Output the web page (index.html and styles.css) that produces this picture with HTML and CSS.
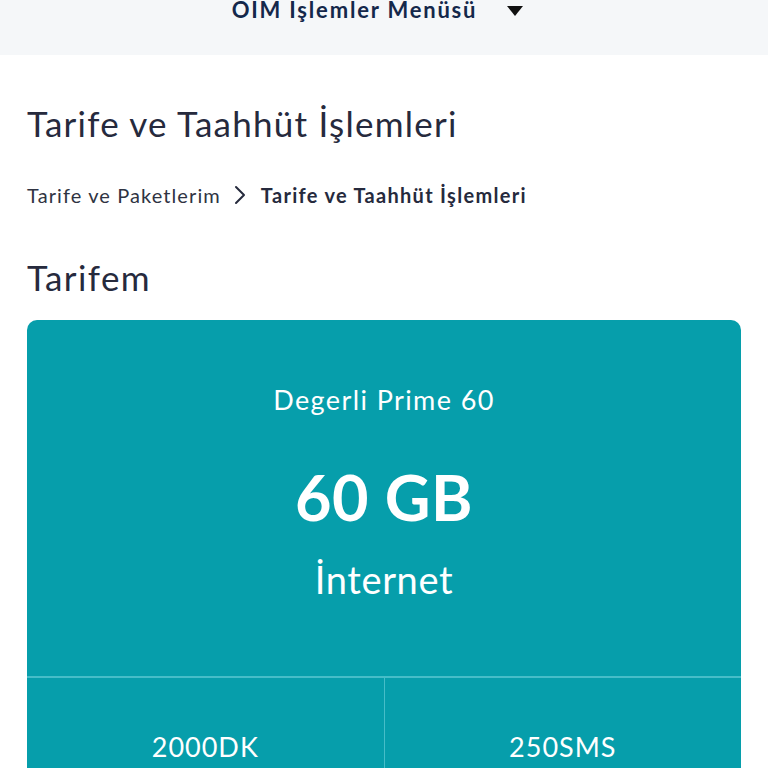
FILE: index.html
```html
<!DOCTYPE html>
<html lang="tr">
<head>
  <meta charset="UTF-8">
  <title>Tarife ve Taahhüt İşlemleri</title>
  <link rel="stylesheet" href="styles.css">
</head>
<body>

  <!-- Top menu -->
  <div class="top-menu">
    <span class="menu-title">OİM İşlemler Menüsü</span>
    <span class="caret"></span>
  </div>

  <div class="page">
    <h1 class="page-title">Tarife ve Taahhüt İşlemleri</h1>

    <div class="breadcrumb">
      <span class="crumb">Tarife ve Paketlerim</span>
      <svg class="crumb-sep" width="14" height="20" viewBox="0 0 14 20">
        <path d="M3 2 L11 10 L3 18" fill="none" stroke="#262a3d" stroke-width="2" stroke-linecap="round" stroke-linejoin="round"/>
      </svg>
      <span class="crumb current">Tarife ve Taahhüt İşlemleri</span>
    </div>

    <h2 class="section-title">Tarifem</h2>

    <!-- Tariff card -->
    <div class="tariff-card">
      <div class="tariff-main">
        <div class="tariff-name">Degerli Prime 60</div>
        <div class="tariff-amount">60 GB</div>
        <div class="tariff-unit">İnternet</div>
      </div>
      <div class="tariff-extras">
        <div class="extra">2000DK</div>
        <div class="extra">250SMS</div>
      </div>
    </div>
  </div>

</body>
</html>
```

FILE: styles.css
```css
body {
  font-family: 'Lato', 'Noto Sans', sans-serif;
  background-color: #fff;
  margin: 0;
  color: #262a3d;
}
.top-menu {
  height: 55px;
  background: #f5f7f9;
  display: flex;
  justify-content: center;
  align-items: flex-start;
  gap: 30px;
  padding-right: 13px;
}
.menu-title {
  font-weight: bold;
  font-size: 22px;
  letter-spacing: 1.8px;
  color: #14284b;
  line-height: 20px;
}
.caret {
  width: 0;
  height: 0;
  border-left: 8px solid transparent;
  border-right: 8px solid transparent;
  border-top: 10px solid #111;
  margin-top: 6px;
}
.page {
  padding: 0 27px;
}
.page-title {
  font-weight: normal;
  font-size: 35px;
  letter-spacing: 1.25px;
  margin: 0;
  padding-top: 47px;
  line-height: 42px;
}
.breadcrumb {
  display: flex;
  align-items: center;
  margin-top: 38px;
  font-size: 20px;
  height: 26px;
}
.crumb {
  color: #2f3342;
  letter-spacing: 1.1px;
}
.crumb-sep {
  margin: 0 14px 0 12px;
}
.crumb.current {
  font-weight: bold;
  color: #262a3d;
  letter-spacing: 1.3px;
}
.section-title {
  font-weight: normal;
  font-size: 35px;
  letter-spacing: 1.4px;
  margin: 0;
  margin-top: 48px;
  line-height: 42px;
}
.tariff-card {
  margin-top: 22px;
  background: #069eab;
  border-radius: 10px;
  color: #fff;
  width: 714px;
}
.tariff-main {
  height: 356px;
  border-bottom: 2px solid #46bdc8;
  display: flex;
  flex-direction: column;
  align-items: center;
}
.tariff-name {
  font-size: 27px;
  letter-spacing: 1.4px;
  margin-top: 62px;
  line-height: 36px;
}
.tariff-amount {
  font-size: 63px;
  font-weight: bold;
  letter-spacing: 0.5px;
  line-height: 70px;
  margin-top: 44px;
}
.tariff-unit {
  font-size: 38px;
  letter-spacing: 0.6px;
  line-height: 46px;
  margin-top: 24px;
}
.tariff-extras {
  display: flex;
  height: 100px;
}
.extra {
  flex: 1;
  text-align: center;
  font-size: 27px;
  letter-spacing: 1px;
  padding-top: 52px;
}
.extra + .extra {
  border-left: 1px solid #46bdc8;
}
```
